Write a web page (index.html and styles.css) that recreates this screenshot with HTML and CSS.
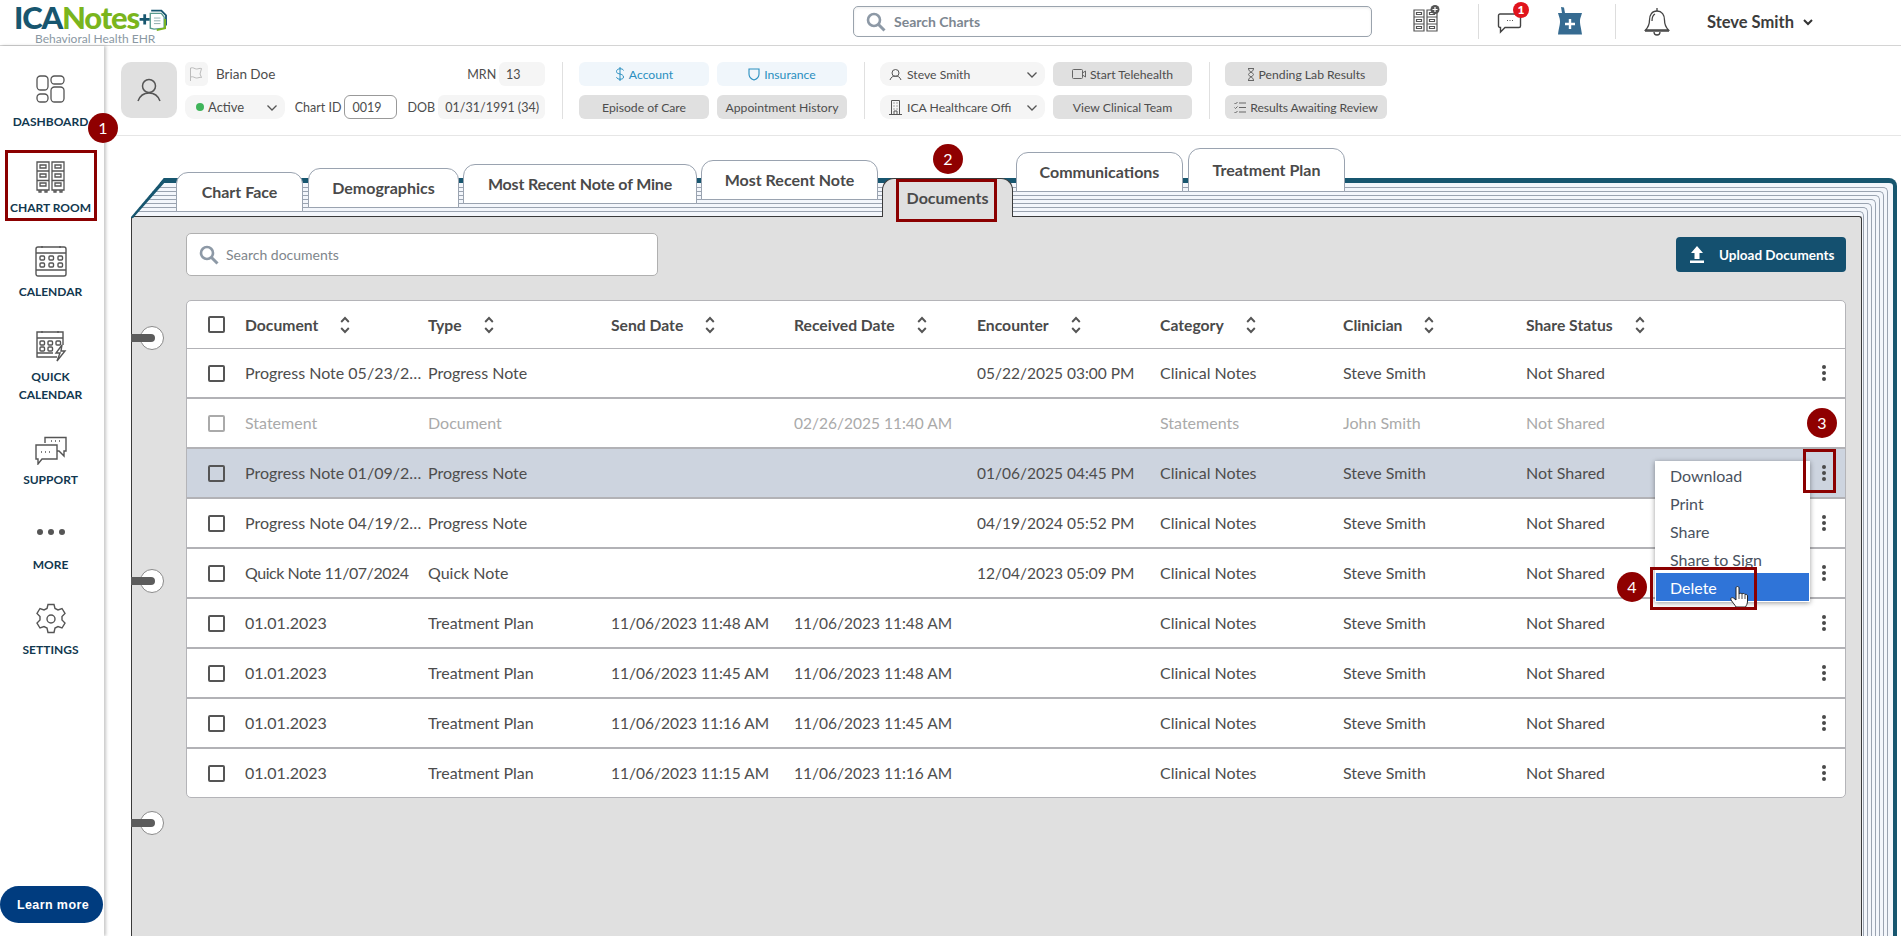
FILE: index.html
```html
<!DOCTYPE html>
<html lang="en">
<head>
<meta charset="utf-8">
<title>ICANotes - Documents</title>
<link rel="stylesheet" href="styles.css">
</head>
<body>
<svg class="defs" width="0" height="0">
  <symbol id="sort" viewBox="0 0 10 18"><path d="M1.2 6 5 2l3.8 4M1.2 12 5 16l3.8-4" fill="none" stroke="#555" stroke-width="1.9"/></symbol>
  <symbol id="kebab" viewBox="0 0 6 18"><circle cx="3" cy="3" r="2" fill="#4a4a4a"/><circle cx="3" cy="9" r="2" fill="#4a4a4a"/><circle cx="3" cy="15" r="2" fill="#4a4a4a"/></symbol>
  <symbol id="chev" viewBox="0 0 12 8"><path d="M1.5 1.5 6 6l4.5-4.5" fill="none" stroke="#555" stroke-width="1.3"/></symbol>
  <symbol id="search" viewBox="0 0 20 20"><circle cx="8" cy="8" r="6" fill="none" stroke="#8d99a6" stroke-width="2.6"/><path d="m12.5 12.5 6 6" stroke="#8d99a6" stroke-width="3"/></symbol>
  <symbol id="cabinet" viewBox="0 0 29 32"><g fill="none" stroke="#555" stroke-width="1.3"><path d="M1 1h12v28H1zM16 1h12v28H16z"/><path d="M1 10h12M1 19.500h12M16 10h12M16 19.500h12"/><path d="M4 4h6v3H4zM4 13h6v3H4zM4 22h6v3H4zM19 4h6v3h-6zM19 13h6v3h-6zM19 22h6v3h-6z"/><path d="M3 29v2h2v-2M9 29v2h2v-2M18 29v2h2v-2M24 29v2h2v-2"/></g></symbol>
</svg>
<div class="app">
  <header class="topbar">
    <div class="logo">
      <div class="logo-main"><span class="logo-ica">ICA</span><span class="logo-notes">Notes</span>
        <svg class="logo-icon" width="29" height="25" viewBox="0 0 31 27"><path d="M6 9v11M0.500 14.500h11" stroke="#17566f" stroke-width="3"/><path d="M13 5h11l5 5v11" fill="none" stroke="#17566f" stroke-width="2"/><path d="M12 8h12l3 4v12l-11 1-4-1z" fill="#fff" stroke="#5a9b8f" stroke-width="1.500"/><path d="M16 13h7M16 16h7M16 19h7" stroke="#8aa" stroke-width="1"/><path d="M28 14v10l-9 2" fill="none" stroke="#7ab51d" stroke-width="2"/></svg>
      </div>
      <div class="logo-sub">Behavioral Health EHR</div>
    </div>
    <div class="top-search"><svg class="ic-search" width="20" height="20"><use href="#search"/></svg><span>Search Charts</span></div>
    <div class="top-actions">
      <svg class="ta-cab" width="28" height="28" viewBox="0 0 28 28"><g fill="none" stroke="#555" stroke-width="1.200"><path d="M2 5h10v21H2zM15 5h10v21H15z"/><path d="M2 12h10M2 19h10M15 12h10M15 19h10M4.500 7.500h5v2h-5zM4.500 14.500h5v2h-5zM4.500 21.500h5v2h-5zM17.500 7.500h5v2h-5zM17.500 14.500h5v2h-5zM17.500 21.500h5v2h-5z"/></g><circle cx="23" cy="4.500" r="4.500" fill="#555"/><path d="M23 2v5M20.500 4.500h5" stroke="#fff" stroke-width="1.200"/></svg>
      <span class="sep"></span>
      <div class="chat">
        <svg width="26" height="26" viewBox="0 0 26 26"><path d="M3 6h19a1.500 1.500 0 0 1 1.500 1.500V18a1.500 1.500 0 0 1-1.500 1.500H8L3.500 24v-4.500H3A1.500 1.500 0 0 1 1.500 18V7.500A1.500 1.500 0 0 1 3 6z" fill="#fff" stroke="#444" stroke-width="1.400"/><path d="M10 12.500h1M12.500 12.500h1M15 12.500h1" stroke="#555"/></svg>
        <span class="chat-badge">1</span>
      </div>
      <svg class="ta-rx" width="26" height="28" viewBox="0 0 26 28"><path d="M4 0l3 .5L8 6h17c-1 4-2 5-2 8.500s1 5.500 2 13H1c1-7.500 2-9.500 2-13S2 10 1 6h4z" fill="#366b91"/><path d="M13 12v10M8 17h10" stroke="#fff" stroke-width="2.400"/></svg>
      <span class="sep sep-b"></span>
      <svg class="ta-bell" width="28" height="29" viewBox="0 0 28 29"><g fill="none" stroke="#444" stroke-width="1.300"><path d="M14 4c-5 0-7.500 4-7.500 9 0 5-1 7-4 10h23c-3-3-4-5-4-10 0-5-2.500-9-7.500-9z"/><path d="M2 24h24M11 25a3 3 0 0 0 6 0M14 1v3"/><path d="M9 14c0-4 1-6 3-7"/></g></svg>
      <span class="user">Steve Smith</span>
      <svg class="user-chev" width="10" height="7" viewBox="0 0 10 7"><path d="M1 1l4 4 4-4" fill="none" stroke="#333" stroke-width="2"/></svg>
    </div>
  </header>

  <div class="body">
    <nav class="sidebar">
      <a class="nav h83"><svg class="nav-ic" width="29" height="28" viewBox="0 0 29 28"><g fill="none" stroke="#555" stroke-width="1.300"><rect x="1" y="1" width="11" height="14" rx="3.500"/><rect x="15" y="1" width="13" height="8" rx="3.500"/><rect x="1" y="19" width="11" height="8" rx="3.500"/><rect x="15" y="12" width="13" height="15" rx="3.500"/></g></svg><span>DASHBOARD</span></a>
      <a class="nav h86"><svg class="nav-ic" width="29" height="32"><use href="#cabinet"/></svg><span>CHART ROOM</span></a>
      <a class="nav h84"><svg class="nav-ic" width="32" height="32" viewBox="0 0 32 32"><g fill="none" stroke="#555" stroke-width="1.400"><rect x="1" y="2" width="30" height="29" rx="2"/><path d="M1 8h30M1 25h30M7 1v2M25 1v2"/><rect x="5" y="11" width="4.500" height="4" rx="1"/><rect x="14" y="11" width="4.500" height="4" rx="1"/><rect x="23" y="11" width="4.500" height="4" rx="1"/><rect x="5" y="18" width="4.500" height="4" rx="1"/><rect x="14" y="18" width="4.500" height="4" rx="1"/><rect x="23" y="18" width="4.500" height="4" rx="1"/></g></svg><span>CALENDAR</span></a>
      <a class="nav h103"><svg class="nav-ic" width="32" height="32" viewBox="0 0 32 32"><g fill="none" stroke="#555" stroke-width="1.400"><path d="M22 27H2V2h26v13"/><path d="M2 8h26M2 23h16M7 1v2M23 1v2"/><rect x="5" y="11" width="4.500" height="4" rx="1"/><rect x="13" y="11" width="4.500" height="4" rx="1"/><rect x="21" y="11" width="4.500" height="4" rx="1"/><rect x="5" y="17" width="4.500" height="4" rx="1"/><rect x="13" y="17" width="4.500" height="4" rx="1"/><path d="M27 15l-6 8h4l-3 8 8-10h-4z" fill="#fff"/></g></svg><span>QUICK<br>CALENDAR</span></a>
      <a class="nav h85"><svg class="nav-ic" width="32" height="29" viewBox="0 0 32 29"><g fill="none" stroke="#555" stroke-width="1.400"><path d="M10 7V1.500h21V15h-2v5l-5-5h-2"/><path d="M1 9h21v14H7l-4 5v-5H1z" fill="#fff"/><path d="M16 5h1M20 5h1M24 5h1M6 16h1M10 16h1M14 16h1"/></g></svg><span>SUPPORT</span></a>
      <a class="nav h85"><svg class="nav-ic" width="28" height="32" viewBox="0 0 28 32"><circle cx="3" cy="14" r="3" fill="#555"/><circle cx="14" cy="14" r="3" fill="#555"/><circle cx="25" cy="14" r="3" fill="#555"/></svg><span>MORE</span></a>
      <a class="nav h85"><svg class="nav-ic" width="32" height="32" viewBox="0 0 32 32"><g fill="none" stroke="#555" stroke-width="1.400"><path d="M13 1.500h6l1 4 3 1.500 4-1.500 3 5-3 3v3.500l3 3-3 5-4-1.500-3 1.500-1 4.500h-6l-1-4.500-3-1.500-4 1.500-3-5 3-3V13.500l-3-3 3-5 4 1.500 3-1.500z"/><circle cx="16" cy="16" r="4"/></g></svg><span>SETTINGS</span></a>
      <button class="learn">Learn more</button>
    </nav>

    <main class="main">
      <section class="patient">
        <div class="avatar"><svg width="24" height="24" viewBox="0 0 24 24"><g fill="none" stroke="#555" stroke-width="1.500"><circle cx="12" cy="8" r="6.500"/><path d="M1 23c2-5.500 6-8 11-8s9 2.500 11 8"/></g></svg></div>
        <div class="pt-info">
          <div class="pt-row">
            <span class="flag"><svg width="14" height="14" viewBox="0 0 14 14"><path d="M1.500 14V1c3-1 4 1 6 1s3-1 5-.5L11 7l1.500 3.500c-2-.5-3 .5-5 .5s-3-2-6-1" fill="none" stroke="#bbb"/></svg></span>
            <span class="pt-name">Brian Doe</span>
            <span class="lbl lbl-mrn">MRN</span>
            <span class="val val-mrn">13</span>
          </div>
          <div class="pt-row">
            <span class="sel sel-active"><i class="dot"></i>Active<svg class="sel-chev" width="12" height="8"><use href="#chev"/></svg></span>
            <span class="lbl lbl-chart">Chart ID</span>
            <span class="chart-id">0019</span>
            <span class="lbl lbl-dob">DOB</span>
            <span class="val val-dob">01/31/1991 (34)</span>
          </div>
        </div>
        <span class="vdiv"></span>
        <div class="btn-grid g130">
          <span class="pbtn blue"><svg width="10" height="14" viewBox="0 0 10 14"><path d="M8.500 3.500C8 2 6.500 1.800 5 1.800S1.500 2.500 1.500 4.500 3.500 6.500 5 7s3.500 1 3.500 3-2 2.200-3.500 2.200-3-.5-3.500-2M5 0v14" fill="none" stroke="#2a8fc0"/></svg>Account</span>
          <span class="pbtn blue"><svg width="12" height="14" viewBox="0 0 12 14"><path d="M1 2c3 0 7 0 10 0v5c0 3-2 5-5 6C3 12 1 10 1 7z" fill="none" stroke="#2a8fc0" stroke-width="1.100"/></svg>Insurance</span>
          <span class="pbtn">Episode of Care</span>
          <span class="pbtn">Appointment History</span>
        </div>
        <span class="vdiv"></span>
        <div class="btn-grid gmix">
          <span class="sel sel-wide"><svg width="13" height="13" viewBox="0 0 13 13"><g fill="none" stroke="#555"><circle cx="6.500" cy="5" r="3.500"/><path d="M1 12c1-3 3-4 5.500-4s4.500 1 5.500 4"/></g></svg>Steve Smith<svg class="sel-chev" width="12" height="8"><use href="#chev"/></svg></span>
          <span class="pbtn"><svg width="14" height="10" viewBox="0 0 14 10"><g fill="none" stroke="#666"><rect x=".5" y=".5" width="10" height="9" rx="1"/><path d="M10.500 4l3-2v6l-3-2"/></g></svg>Start Telehealth</span>
          <span class="sel sel-wide"><svg width="13" height="15" viewBox="0 0 13 15"><g fill="none" stroke="#555"><path d="M2.500 14V.5h8V14M0 14.500h13M4.500 3h1M7.500 3h1M4.500 6h1M7.500 6h1M4.500 9h1M7.500 9h1M5 14v-3h3v3"/></g></svg><span class="clip">ICA Healthcare Offi</span><svg class="sel-chev" width="12" height="8"><use href="#chev"/></svg></span>
          <span class="pbtn">View Clinical Team</span>
        </div>
        <span class="vdiv"></span>
        <div class="btn-grid g162">
          <span class="pbtn"><svg width="8" height="13" viewBox="0 0 8 13"><path d="M1 .5h6M1 12.500h6M1.500 1c0 3 5 3.500 5 5.500s-5 2.500-5 5.500M6.500 1c0 3-5 3.500-5 5.500s5 2.500 5 5.500" fill="none" stroke="#666"/></svg>Pending Lab Results</span>
          <span class="pbtn tight"><svg width="12" height="13" viewBox="0 0 12 13"><path d="M5 2h7M5 6.500h7M5 11h7M.5 2l1 1 2-2M.5 6.500l1 1 2-2M.5 11l1 1 2-2" fill="none" stroke="#666"/></svg>Results Awaiting Review</span>
        </div>
      </section>

      <section class="book">
        <div class="cover">
          <div class="page"><div class="page"><div class="page"><div class="page"><div class="page"><div class="page"><div class="page last">
            <div class="panel">
              <div class="toolbar">
                <div class="doc-search"><svg width="20" height="20"><use href="#search"/></svg><span>Search documents</span></div>
                <button class="upload"><svg width="14" height="17" viewBox="0 0 14 17"><path d="M7 0l6 7H9.500v6h-5V7H1zM0 14.500h14V17H0z" fill="#fff"/></svg>Upload Documents</button>
              </div>
              <div class="table">
                <div class="row head">
                  <span class="cb"></span>
                  <span class="th">Document<svg width="10" height="18"><use href="#sort"/></svg></span>
                  <span class="th">Type<svg width="10" height="18"><use href="#sort"/></svg></span>
                  <span class="th">Send Date<svg width="10" height="18"><use href="#sort"/></svg></span>
                  <span class="th">Received Date<svg width="10" height="18"><use href="#sort"/></svg></span>
                  <span class="th">Encounter<svg width="10" height="18"><use href="#sort"/></svg></span>
                  <span class="th">Category<svg width="10" height="18"><use href="#sort"/></svg></span>
                  <span class="th">Clinician<svg width="10" height="18"><use href="#sort"/></svg></span>
                  <span class="th">Share Status<svg width="10" height="18"><use href="#sort"/></svg></span>
                  <span></span>
                </div>
                <div class="row"><span class="cb"></span><span class="td">Progress Note 05/23/2025</span><span class="td">Progress Note</span><span class="td"></span><span class="td"></span><span class="td">05/22/2025 03:00 PM</span><span class="td">Clinical Notes</span><span class="td">Steve Smith</span><span class="td">Not Shared</span><svg class="keb" width="6" height="18"><use href="#kebab"/></svg></div>
                <div class="row dim"><span class="cb"></span><span class="td">Statement</span><span class="td">Document</span><span class="td"></span><span class="td">02/26/2025 11:40 AM</span><span class="td"></span><span class="td">Statements</span><span class="td">John Smith</span><span class="td">Not Shared</span><span></span></div>
                <div class="row sel-row"><span class="cb"></span><span class="td">Progress Note 01/09/2025</span><span class="td">Progress Note</span><span class="td"></span><span class="td"></span><span class="td">01/06/2025 04:45 PM</span><span class="td">Clinical Notes</span><span class="td">Steve Smith</span><span class="td">Not Shared</span><svg class="keb" width="6" height="18"><use href="#kebab"/></svg></div>
                <div class="row"><span class="cb"></span><span class="td">Progress Note 04/19/2024</span><span class="td">Progress Note</span><span class="td"></span><span class="td"></span><span class="td">04/19/2024 05:52 PM</span><span class="td">Clinical Notes</span><span class="td">Steve Smith</span><span class="td">Not Shared</span><svg class="keb" width="6" height="18"><use href="#kebab"/></svg></div>
                <div class="row"><span class="cb"></span><span class="td quick">Quick Note 11/07/2024</span><span class="td">Quick Note</span><span class="td"></span><span class="td"></span><span class="td">12/04/2023 05:09 PM</span><span class="td">Clinical Notes</span><span class="td">Steve Smith</span><span class="td">Not Shared</span><svg class="keb" width="6" height="18"><use href="#kebab"/></svg></div>
                <div class="row"><span class="cb"></span><span class="td">01.01.2023</span><span class="td">Treatment Plan</span><span class="td">11/06/2023 11:48 AM</span><span class="td">11/06/2023 11:48 AM</span><span class="td"></span><span class="td">Clinical Notes</span><span class="td">Steve Smith</span><span class="td">Not Shared</span><svg class="keb" width="6" height="18"><use href="#kebab"/></svg></div>
                <div class="row"><span class="cb"></span><span class="td">01.01.2023</span><span class="td">Treatment Plan</span><span class="td">11/06/2023 11:45 AM</span><span class="td">11/06/2023 11:48 AM</span><span class="td"></span><span class="td">Clinical Notes</span><span class="td">Steve Smith</span><span class="td">Not Shared</span><svg class="keb" width="6" height="18"><use href="#kebab"/></svg></div>
                <div class="row"><span class="cb"></span><span class="td">01.01.2023</span><span class="td">Treatment Plan</span><span class="td">11/06/2023 11:16 AM</span><span class="td">11/06/2023 11:45 AM</span><span class="td"></span><span class="td">Clinical Notes</span><span class="td">Steve Smith</span><span class="td">Not Shared</span><svg class="keb" width="6" height="18"><use href="#kebab"/></svg></div>
                <div class="row end"><span class="cb"></span><span class="td">01.01.2023</span><span class="td">Treatment Plan</span><span class="td">11/06/2023 11:15 AM</span><span class="td">11/06/2023 11:16 AM</span><span class="td"></span><span class="td">Clinical Notes</span><span class="td">Steve Smith</span><span class="td">Not Shared</span><svg class="keb" width="6" height="18"><use href="#kebab"/></svg></div>
              </div>
            </div>
          </div></div></div></div></div></div></div>
          <svg class="corner" width="46" height="40" viewBox="0 0 46 40"><path d="M-3 42 32 2.500H46" fill="none" stroke="#17566f" stroke-width="5"/></svg>
        </div>

        <div class="tabs">
          <span class="tab t1">Chart Face</span>
          <span class="tab t2">Demographics</span>
          <span class="tab t3">Most Recent Note of Mine</span>
          <span class="tab t4">Most Recent Note</span>
          <span class="tab t5">Documents</span>
          <span class="tab t6">Communications</span>
          <span class="tab t7">Treatment Plan</span>
        </div>

        <span class="ring r1"><i></i></span>
        <span class="ring r2"><i></i></span>
        <span class="ring r3"><i></i></span>
      </section>
    </main>
  </div>

  <ul class="menu">
    <li>Download</li>
    <li>Print</li>
    <li>Share</li>
    <li>Share to Sign</li>
    <li class="on">Delete</li>
  </ul>
  <svg class="hand" width="19" height="23" viewBox="0 0 19 23"><path d="M6 2c0-2 3-2 3 0v6c1-1 2.500-1 3 0 1-1 2.500-.5 3 .5 1-.5 2.500 0 2.500 1.500v5c0 3-1 4-2 6H6c-1-2-3-4-5-7-1-2 1-3 2.500-2L6 14z" fill="#fff" stroke="#222" stroke-width="1"/><path d="M9 8v5M12 8v5M15 9v4" stroke="#222" stroke-width=".8"/></svg>

  <span class="mark m1">1</span>
  <span class="mark m2">2</span>
  <span class="mark m3">3</span>
  <span class="mark m4">4</span>
  <span class="box b1"></span>
  <span class="box b2"></span>
  <span class="box b3"></span>
  <span class="box b4"></span>
</div>
</body>
</html>
```
FILE: styles.css
```css
* { box-sizing: border-box; }
html, body { margin: 0; padding: 0; background: #fff; }
body { font-family: Lato, "Open Sans", "Liberation Sans", sans-serif; color: #4d4d4d; }
.defs { position: absolute; }
.app { position: relative; width: 1901px; height: 936px; overflow: hidden; display: flex; flex-direction: column; }

/* top bar */
.topbar { height: 46px; flex: none; border-bottom: 1px solid #d4d4d4; display: flex; align-items: flex-start; padding-left: 14px; }
.logo { width: 161px; padding-top: 2px; }
.logo-main { display: flex; align-items: flex-start; height: 31px; font-size: 31px; font-weight: 900; letter-spacing: -1.2px; line-height: 31px; }
.logo-ica { color: #17566f; }
.logo-notes { color: #7ab51d; }
.logo-icon { margin: 4px 0 0 0; }
.logo-sub { font-size: 12px; line-height: 12px; color: #8a98a3; padding-left: 21px; }
.top-search { margin: 6px 0 0 678px; width: 519px; height: 31px; border: 1px solid #9aa3ad; border-radius: 5px; display: flex; align-items: center; padding-left: 12px; gap: 8px; font-size: 14px; font-weight: 700; color: #7d8791; box-shadow: inset 0 1px 3px rgba(0,0,0,.08); }
.top-actions { display: flex; align-items: flex-start; margin-left: 40px; }
.ta-cab { margin-top: 5px; }
.sep { width: 1px; height: 35px; background: #ddd; margin: 4px 0 0 38px; }
.chat { position: relative; width: 26px; height: 26px; margin: 8px 0 0 18px; }
.chat-badge { position: absolute; left: 16px; top: -6px; width: 16px; height: 16px; border-radius: 50%; background: #e0141c; color: #fff; font-size: 12px; font-weight: 900; line-height: 16px; text-align: center; }
.ta-rx { margin: 7px 0 0 34px; }
.sep-b { margin-left: 32px; }
.ta-bell { margin: 7px 0 0 27px; }
.user { margin: 12px 0 0 36px; font-size: 16.500px; font-weight: 700; color: #3c3c3c; line-height: 20px; }
.user-chev { margin: 19px 0 0 9px; }

/* sidebar */
.body { flex: 1; display: flex; min-height: 0; }
.sidebar { width: 104px; flex: none; position: relative; display: flex; flex-direction: column; box-shadow: 2px 0 3px rgba(0,0,0,.22); z-index: 2; background: #fff; }
.nav { display: flex; flex-direction: column; align-items: center; justify-content: flex-end; text-align: center; font-size: 12px; font-weight: 700; line-height: 18px; color: #12384f; padding-right: 3px; }
.nav-ic { margin-bottom: 6px; flex: none; }
.h83 .nav-ic { margin-bottom: 10px; }
.nav span { display: block; }
.h83 { height: 85px; }
.h86 { height: 86px; }
.h84 { height: 84px; }
.h103 { height: 103px; }
.h85 { height: 85px; }
.learn { position: absolute; left: 0; top: 840px; width: 103px; height: 37px; border: 0; border-radius: 19px; background: #003c7f; color: #fff; font: 700 12.500px "Liberation Sans", sans-serif; letter-spacing: .4px; padding: 0 0 0 3px; }

/* patient header */
.main { flex: 1; min-width: 0; display: flex; flex-direction: column; }
.patient { height: 90px; flex: none; border-bottom: 1px solid #e6e6e6; display: flex; padding: 16px 0 0 17px; font-size: 13px; }
.avatar { width: 56px; height: 56px; background: #e0e0e0; border-radius: 10px; display: flex; align-items: center; justify-content: center; }
.pt-info { margin-left: 8px; width: 360px; display: flex; flex-direction: column; gap: 9px; }
.pt-row { display: flex; align-items: center; height: 24px; }
.flag { width: 23px; height: 24px; background: #f5f5f5; border-radius: 5px; display: flex; align-items: center; justify-content: center; }
.pt-name { margin-left: 8px; font-size: 13.500px; width: 252px; }
.lbl { font-size: 12.500px; }
.lbl-mrn { width: 32px; }
.val { background: #f5f5f5; height: 24px; border-radius: 6px; display: flex; align-items: center; font-size: 12.500px; }
.val-mrn { width: 46px; padding-left: 7px; }
.val-dob { width: 107px; padding-left: 7px; white-space: nowrap; }
.sel { background: #f5f5f5; height: 24px; border-radius: 9px; display: flex; align-items: center; font-size: 13px; position: relative; white-space: nowrap; }
.sel-active { width: 100px; padding-left: 11px; }
.dot { width: 8px; height: 8px; border-radius: 50%; background: #3fb45a; margin-right: 4px; }
.sel-chev { position: absolute; right: 7px; top: 9px; }
.lbl-chart { margin-left: 10px; width: 49px; }
.chart-id { width: 54px; height: 24px; border: 1px solid #999; border-radius: 6px; display: flex; align-items: center; padding-left: 8px; font-size: 12.500px; }
.lbl-dob { margin-left: 10px; width: 31px; }
.vdiv { width: 1px; height: 57px; background: #e0e0e0; margin-left: 17px; flex: none; }
.btn-grid { display: grid; grid-template-rows: 24px 24px; row-gap: 9px; column-gap: 8px; margin-left: 15px; }
.g130 { grid-template-columns: 130px 130px; margin-left: 16px; }
.gmix { grid-template-columns: 165px 139px; }
.g162 { grid-template-columns: 162px; }
.pbtn { background: #e0e0e0; border-radius: 6px; display: flex; align-items: center; justify-content: center; gap: 4px; font-size: 12.200px; white-space: nowrap; }
.pbtn.blue { background: #f0f6fb; color: #2a8fc0; }
.pbtn.tight { letter-spacing: -.1px; }
.sel-wide { padding-left: 9px; gap: 5px; font-size: 12.200px; }
.clip { width: 104px; overflow: hidden; }

/* book */
.book { position: relative; margin: 42px 4px 0 27px; flex: 1; min-height: 0; }
.cover { border-top: 5px solid #17566f; border-right: 4px solid #17566f; border-radius: 0 8px 0 0; background: #f3f6fb; padding: 4px 5px 0 0; clip-path: polygon(33px 0, 100% 0, 100% 100%, 0 100%, 0 39px); height: 760px; position: relative; }
.page { border-top: 1px solid #9aa3b0; border-right: 1px solid #9aa3b0; border-radius: 0 5px 0 0; padding: 3px 3px 0 0; }
.page.last { padding: 4px 1px 0 0; }
.corner { position: absolute; left: 0; top: -5px; }
.panel { background: #e0e0e0; border: 1px solid #3a3a3a; border-bottom: 0; border-radius: 3px 3px 0 0; height: 730px; padding: 16px 15px 0 54px; }
.toolbar { display: flex; justify-content: space-between; align-items: center; height: 43px; }
.doc-search { width: 472px; height: 43px; background: #fff; border: 1px solid #b0b0b0; border-radius: 5px; display: flex; align-items: center; gap: 7px; padding-left: 12px; font-size: 14px; color: #80868c; }
.upload { width: 170px; height: 35px; border: 0; border-radius: 4px; background: #14506f; color: #fff; font: 700 13.500px Lato, sans-serif; display: flex; align-items: center; padding: 0 0 0 14px; gap: 15px; }
.table { margin-top: 24px; background: #fff; border: 1px solid #b4b4b8; border-radius: 5px; overflow: hidden; }
.row { display: grid; grid-template-columns: 37px repeat(7, 183px) 1fr 6px; align-items: center; height: 50px; padding: 0 18px 0 21px; border-bottom: 2px solid #b2b2b6; font-size: 16px; color: #4d4d4d; }
.row.head { height: 48px; border-bottom-width: 1px; }
.row.end { height: 48px; border-bottom: 0; }
.row.dim { color: #aaa; }
.row.dim .cb { border-color: #aaa; }
.row.sel-row { background: #cdd4df; }
.row.sel-row .cb { background: transparent; }
.cb { width: 17px; height: 17px; border: 2px solid #555; border-radius: 2px; background: #fff; display: block; }
.td { white-space: nowrap; overflow: hidden; text-overflow: ellipsis; padding-right: 6px; line-height: 20px; height: 20px; }
.td:nth-child(4), .td:nth-child(5), .td:nth-child(6) { font-size: 15.500px; }
.td.quick { letter-spacing: -.45px; }
.th { display: flex; align-items: center; gap: 22px; font-size: 15.700px; font-weight: 700; color: #4a4a4a; }
.keb { justify-self: center; }

/* tabs */
.tabs { position: absolute; left: 45px; top: -30px; display: flex; align-items: flex-start; }
.tab { display: flex; align-items: center; justify-content: center; background: #fff; border: 1px solid #9aa3b0; border-radius: 12px 12px 0 0; font-size: 16px; font-weight: 700; color: #4a4a4a; white-space: nowrap; padding-bottom: 2px; }
.t1 { width: 127px; height: 40px; margin-top: 24px; }
.t2 { width: 151px; height: 40px; margin: 20px 0 0 5px; }
.t3 { width: 234px; height: 40px; margin: 16px 0 0 4px; letter-spacing: -.18px; }
.t4 { width: 177px; height: 40px; margin: 12px 0 0 4px; }
.t5 { width: 131px; height: 39px; margin: 30px 0 0 4px; background: #e0e0e0; border-color: #3a3a3a; border-bottom: 0; }
.t6 { width: 167px; height: 40px; margin: 4px 0 0 3px; }
.t7 { width: 157px; height: 44px; margin: 0 0 0 5px; }

/* rings */
.ring { position: absolute; left: 9px; width: 24px; height: 24px; border: 1px solid #8a8a8a; border-radius: 50%; background: #fff; }
.ring i { position: absolute; left: -10px; top: 7px; width: 24px; height: 8px; background: #5c5c5c; border-radius: 0 4px 4px 0; }
.r1 { top: 148px; }
.r2 { top: 391px; }
.r3 { top: 633px; }

/* row menu */
.menu { position: absolute; left: 1655px; top: 461px; width: 155px; height: 141px; margin: 0; padding: 0 1px 0; list-style: none; background: #fff; box-shadow: 0 1px 5px rgba(0,0,0,.4); font-size: 16px; color: #4a5260; z-index: 5; }
.menu li { height: 28px; line-height: 30px; padding-left: 14px; }
.menu .on { background: #2f74d8; color: #fff; }
.hand { position: absolute; left: 1730px; top: 586px; z-index: 6; }

/* annotations */
.mark { position: absolute; width: 30px; height: 30px; border-radius: 50%; background: #8f0000; color: #fff; font-size: 16px; line-height: 30px; text-align: center; z-index: 8; }
.m1 { left: 88px; top: 113px; }
.m2 { left: 933px; top: 144px; }
.m3 { left: 1807px; top: 408px; }
.m4 { left: 1617px; top: 572px; }
.box { position: absolute; border: 3px solid #8b0000; z-index: 7; }
.b1 { left: 5px; top: 150px; width: 92px; height: 71px; }
.b2 { left: 896px; top: 179px; width: 101px; height: 43px; }
.b3 { left: 1803px; top: 449px; width: 33px; height: 44px; }
.b4 { left: 1650px; top: 567px; width: 107px; height: 43px; }
```
